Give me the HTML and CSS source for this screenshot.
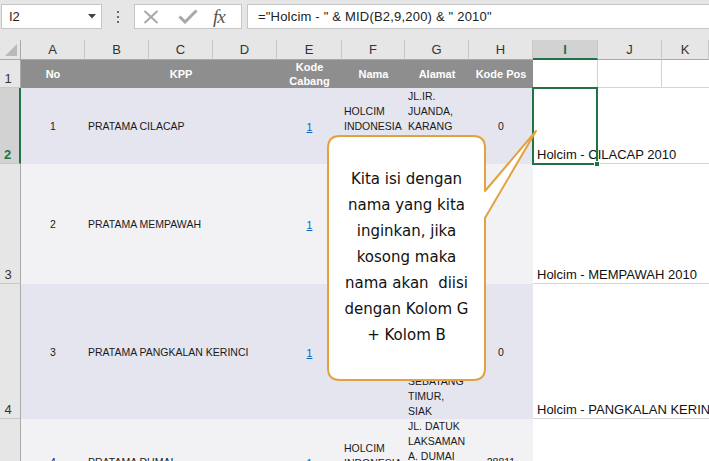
FILE: index.html
```html
<!DOCTYPE html>
<html>
<head>
<meta charset="utf-8">
<title>Sheet</title>
<link rel="stylesheet" href="styles.css">
</head>
<body>
<div class="fbar">
  <div class="namebox"><span>I2</span>
    <svg class="dd" width="8" height="5" viewBox="0 0 8 5"><path d="M0 0H8L4 4.5Z" fill="#444"/></svg>
  </div>
  <div class="dots">
    <svg width="4" height="12" viewBox="0 0 4 12"><rect x="1" y="0" width="2" height="2" fill="#6a6a6a"/><rect x="1" y="5" width="2" height="2" fill="#6a6a6a"/><rect x="1" y="10" width="2" height="2" fill="#6a6a6a"/></svg>
  </div>
  <div class="fxbox">
    <svg class="ic-x" width="16" height="14" viewBox="0 0 16 14"><path d="M1.5 1 L14.5 13 M14.5 1 L1.5 13" stroke="#a8a8a8" stroke-width="2" fill="none"/></svg>
    <svg class="ic-ok" width="20" height="15" viewBox="0 0 20 15"><path d="M1.5 7.5 L7 13 L18.5 1.5" stroke="#a8a8a8" stroke-width="3" fill="none"/></svg>
    <span class="fx">fx</span>
  </div>
  <div class="formula">="Holcim - " &amp; MID(B2,9,200) &amp; " 2010"</div>
</div>

<div class="sheet">
  <!-- column headers -->
  <div class="corner"><svg width="12" height="12" viewBox="0 0 12 12"><path d="M12 0V12H0Z" fill="#b9b9b9"/></svg></div>
  <div class="ch">A</div><div class="ch">B</div><div class="ch">C</div><div class="ch">D</div>
  <div class="ch">E</div><div class="ch">F</div><div class="ch">G</div><div class="ch">H</div>
  <div class="ch sel">I</div><div class="ch">J</div><div class="ch">K</div>

  <!-- row 1 -->
  <div class="rh">1</div>
  <div class="th">No</div>
  <div class="th span3">KPP</div>
  <div class="th">Kode<br>Cabang</div>
  <div class="th">Nama</div>
  <div class="th">Alamat</div>
  <div class="th">Kode Pos</div>
  <div class="blank vr"></div><div class="blank vr"></div><div class="blank"></div>

  <!-- row 2 -->
  <div class="rh rsel">2</div>
  <div class="td band c">1</div>
  <div class="td band span3 l">PRATAMA CILACAP</div>
  <div class="td band c"><span class="lnk">1</span></div>
  <div class="td band w top p2f"><span>HOLCIM</span><span>INDONESIA</span></div>
  <div class="td band w g top p2g"><span>JL.IR.</span><span>JUANDA,</span><span>KARANG</span></div>
  <div class="td band c">0</div>
  <div class="out">Holcim - CILACAP 2010</div>

  <!-- row 3 -->
  <div class="rh">3</div>
  <div class="td lite c">2</div>
  <div class="td lite span3 l">PRATAMA MEMPAWAH</div>
  <div class="td lite c"><span class="lnk">1</span></div>
  <div class="td lite w"></div>
  <div class="td lite w g"></div>
  <div class="td lite c"></div>
  <div class="out">Holcim - MEMPAWAH 2010</div>

  <!-- row 4 -->
  <div class="rh">4</div>
  <div class="td band c">3</div>
  <div class="td band span3 l">PRATAMA PANGKALAN KERINCI</div>
  <div class="td band c"><span class="lnk">1</span></div>
  <div class="td band w"></div>
  <div class="td band w g bot"><span>SEBATANG</span><span>TIMUR,</span><span>SIAK</span></div>
  <div class="td band c">0</div>
  <div class="out">Holcim - PANGKALAN KERINCI 2010</div>

  <!-- row 5 -->
  <div class="rh"></div>
  <div class="td lite c">4</div>
  <div class="td lite span3 l">PRATAMA DUMAI</div>
  <div class="td lite c"><span class="lnk">1</span></div>
  <div class="td lite w top p5f"><span>HOLCIM</span><span>INDONESIA</span></div>
  <div class="td lite w g top p5g"><span>JL. DATUK</span><span>LAKSAMAN</span><span>A. DUMAI</span></div>
  <div class="td lite c">28811</div>
  <div class="out"></div>
</div>

<div class="selection"><span class="handle"></span></div>

<svg class="bubble" width="709" height="461" viewBox="0 0 709 461">
  <path d="M340 136 H473 Q485 136 485 148 V191 L536 131 L485 218 V368 Q485 380 473 380 H340 Q328 380 328 368 V148 Q328 136 340 136 Z" fill="#ffffff" stroke="#e2a23e" stroke-width="2" stroke-linejoin="round"/>
</svg>
<div class="bubble-text">
  Kita isi dengan<br>nama yang kita<br>inginkan, jika<br>kosong maka<br>nama akan&nbsp; diisi<br>dengan Kolom G<br>+ Kolom B
</div>
</body>
</html>
```

FILE: styles.css
```css
* { box-sizing: border-box; }
html, body { margin: 0; padding: 0; }
body {
  width: 709px;
  height: 461px;
  overflow: hidden;
  position: relative;
  background: #ffffff;
  font-family: "Liberation Sans", Arial, sans-serif;
  color: #222;
}

/* formula bar */
.fbar {
  display: flex;
  align-items: flex-start;
  height: 40px;
  padding-top: 4px;
  background: #e6e6e6;
}
.namebox {
  width: 101px;
  height: 25px;
  margin-left: 1px;
  background: #fff;
  border: 1px solid #c6c6c6;
  display: flex;
  align-items: center;
  justify-content: space-between;
  padding: 0 5px 0 7px;
  font-size: 13px;
  color: #222;
}
.dots {
  width: 32px;
  height: 25px;
  display: flex;
  align-items: center;
  justify-content: center;
}
.fxbox {
  width: 108px;
  height: 25px;
  background: #fff;
  border: 1px solid #c6c6c6;
  display: flex;
  align-items: center;
  padding-left: 8px;
}
.ic-x { margin-right: 19px; }
.ic-ok { margin-right: 15px; }
.fx {
  font-family: "Liberation Serif", "Times New Roman", serif;
  font-style: italic;
  font-size: 19px;
  color: #555;
  line-height: 20px;
  letter-spacing: -1px;
}
.formula {
  flex: 1;
  margin-left: 5px;
  height: 25px;
  background: #fff;
  border: 1px solid #c6c6c6;
  border-right: none;
  padding-left: 10px;
  font-size: 13px;
  letter-spacing: 0.2px;
  line-height: 23px;
  color: #222;
  white-space: pre;
}

/* sheet grid */
.sheet {
  display: grid;
  width: 709px;
  overflow: hidden;
  grid-template-columns: 21px 64px 64px 64px 64px 65px 63px 64px 64px 65px 64px 47px;
  grid-template-rows: 20px 28px 76px 120px 135px 86px;
}
.corner {
  background: #e6e6e6;
  border-right: 1px solid #a9a9a9;
  border-bottom: 1px solid #a9a9a9;
  display: flex;
  align-items: flex-end;
  justify-content: flex-end;
  padding: 0 3px 3px 0;
}
.ch {
  background: #e6e6e6;
  border-right: 1px solid #c8c8c8;
  border-bottom: 1px solid #a9a9a9;
  display: flex;
  align-items: center;
  justify-content: center;
  font-size: 13px;
  color: #333;
}
.ch.sel {
  background: #d2d2d2;
  color: #217346;
  border-bottom: 2px solid #217346;
  font-weight: bold;
}
.rh {
  background: #e6e6e6;
  border-right: 1px solid #a9a9a9;
  border-bottom: 1px solid #c8c8c8;
  display: flex;
  align-items: flex-end;
  justify-content: center;
  padding-right: 4px;
  font-size: 13px;
  line-height: 17px;
  color: #333;
}
.rh.rsel {
  background: #d2d2d2;
  color: #217346;
  font-weight: bold;
  border-right: 2px solid #217346;
}

.th {
  background: #8e8e8e;
  color: #fff;
  font-weight: bold;
  font-size: 11px;
  line-height: 14px;
  display: flex;
  align-items: center;
  justify-content: center;
  text-align: center;
}
.span3 { grid-column: span 3; }
.blank {
  background: #fff;
  border-bottom: 1px solid #d4d4d4;
}
.blank.vr { border-right: 1px solid #d4d4d4; }

.td {
  font-size: 10.5px;
  color: #1a1a1a;
  display: flex;
  flex-direction: column;
  justify-content: center;
  overflow: hidden;
  white-space: nowrap;
}
.band { background: #e5e5ef; }
.lite { background: #f2f2f4; }
.td.c { align-items: center; }
.td.l { padding-left: 3px; }
.td.w { padding-left: 2px; line-height: 15px; }
.td.w.g { padding-left: 3px; }
.td.top { justify-content: flex-start; }
.td.bot { justify-content: flex-end; }
.p2f { padding-top: 16px; }
.p2g { padding-top: 1px; }
.p5f { padding-top: 22px; }
.p5g { padding-top: 0; }
.lnk { color: #0563c1; text-decoration: underline; }
.td.c:has(.lnk) { padding-top: 2px; }

.out {
  grid-column: span 3;
  background: #fff;
  border-bottom: 1px solid #d4d4d4;
  display: flex;
  align-items: flex-end;
  padding: 0 0 0 4px;
  font-size: 13px;
  line-height: 16px;
  color: #111;
  white-space: nowrap;
  overflow: hidden;
}

/* overlays */
.selection {
  position: absolute;
  left: 532px;
  top: 87px;
  width: 66px;
  height: 78px;
  border: 2px solid #217346;
}
.handle {
  position: absolute;
  right: -4px;
  bottom: -4px;
  width: 6px;
  height: 6px;
  background: #217346;
  border: 1px solid #fff;
}
.bubble {
  position: absolute;
  left: 0;
  top: 0;
}
.bubble-text {
  position: absolute;
  left: 328px;
  top: 166px;
  width: 157px;
  text-align: center;
  font-family: "DejaVu Sans", sans-serif;
  font-size: 15px;
  line-height: 26px;
  color: #111;
}
```
